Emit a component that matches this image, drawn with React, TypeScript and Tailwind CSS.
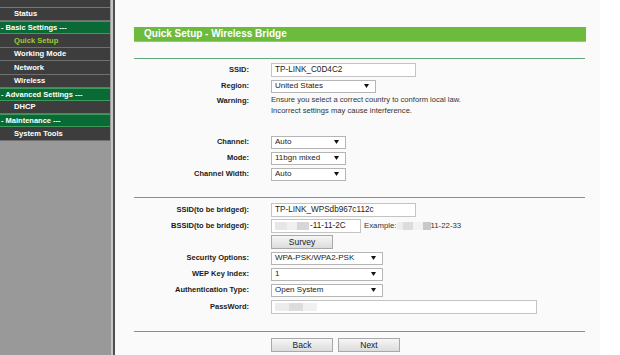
import React from "react";

const font = { fontFamily: '"Liberation Sans", Arial, sans-serif' };

const menu = [
  { label: "Status", kind: "item" },
  { label: "- Basic Settings ---", kind: "group" },
  { label: "Quick Setup", kind: "active" },
  { label: "Working Mode", kind: "item" },
  { label: "Network", kind: "item" },
  { label: "Wireless", kind: "item" },
  { label: "- Advanced Settings ---", kind: "group" },
  { label: "DHCP", kind: "item" },
  { label: "- Maintenance ---", kind: "group" },
  { label: "System Tools", kind: "item" },
];

function Sidebar() {
  return (
    <div className="flex w-[111px] shrink-0 flex-col bg-[#999999]">
      <div className="h-[8px] w-[110px] border-b border-[#777777] bg-[#3d3d3d]" />
      {menu.map((m) => {
        if (m.kind === "group") {
          return (
            <div
              key={m.label}
              className="flex h-[13px] w-[110px] items-center border-y border-[#3f9a5e] bg-[#0a6a36] pl-[1px] text-[7.5px] font-bold leading-none text-white"
            >
              {m.label}
            </div>
          );
        }
        return (
          <div
            key={m.label}
            className={
              "flex h-[13.4px] w-[110px] items-center border-b border-[#6f6f6f] bg-[#3d3d3d] pl-[14px] text-[7.6px] font-bold leading-none " +
              (m.kind === "active" ? "text-[#9acd32]" : "text-white")
            }
          >
            {m.label}
          </div>
        );
      })}
    </div>
  );
}

function Caret() {
  return (
    <svg width="5" height="4" viewBox="0 0 5 4" className="shrink-0">
      <path d="M0 0 H5 L2.5 4 Z" fill="#111" />
    </svg>
  );
}

function Select({ value, w }: { value: string; w: string }) {
  return (
    <div
      className={
        "flex h-[13px] items-center justify-between border border-[#b5b5b5] bg-white pl-[3px] pr-[6px] text-[8px] leading-none text-[#222] " +
        w
      }
    >
      <span>{value}</span>
      <Caret />
    </div>
  );
}

function TextBox({ w, children }: { w: string; children?: React.ReactNode }) {
  return (
    <div
      className={
        "flex h-[14px] items-center border border-[#c4c4c4] bg-white pl-[3px] text-[8.2px] leading-none text-[#222] " +
        w
      }
    >
      {children}
    </div>
  );
}

function Button({ label, w }: { label: string; w: string }) {
  return (
    <div
      className={
        "flex h-[14px] items-center justify-center border border-[#a8a8a8] bg-gradient-to-b from-[#f6f6f6] to-[#dcdcdc] text-[8.5px] leading-none text-[#222] " +
        w
      }
    >
      {label}
    </div>
  );
}

function Row({
  label,
  children,
  h = "h-[16px]",
}: {
  label?: string;
  children?: React.ReactNode;
  h?: string;
}) {
  return (
    <div className={"flex items-center " + h}>
      <div className="w-[116px] shrink-0 pr-[1px] text-right text-[7.5px] font-bold leading-none text-[#1a1a1a]">
        {label}
      </div>
      <div className="flex items-center pl-[21px]">{children}</div>
    </div>
  );
}

function Blur({ w, c = "bg-[#dedede]" }: { w: string; c?: string }) {
  return <span className={"inline-block h-[8px] " + w + " " + c} />;
}

function Divider() {
  return <div className="h-[1px] w-[451px] bg-[#63a77f]" />;
}

export default function App() {
  return (
    <div className="flex h-[355px] w-[620px] overflow-hidden bg-white" style={font}>
      <Sidebar />
      <div className="w-[2px] shrink-0 bg-[#c6c6c6]" />
      <div className="w-[2px] shrink-0 bg-[#4f4f4f]" />
      <div className="flex w-[485px] shrink-0 flex-col bg-[#fafafa] pl-[19px]">
        <div className="mt-[27px] flex h-[15px] w-[452px] items-center border-b border-[#8fd160] bg-[#6cbb3c] pl-[10px] text-[10px] font-bold leading-none text-white">
          Quick Setup - Wireless Bridge
        </div>

        <div className="mt-[16px]">
          <Divider />
        </div>

        <div className="mt-[3px] flex flex-col">
          <Row label="SSID:">
            <TextBox w="w-[145px]">TP-LINK_C0D4C2</TextBox>
          </Row>
          <Row label="Region:">
            <Select value="United States" w="w-[105px]" />
          </Row>
          <div className="flex items-start">
            <div className="w-[116px] shrink-0 pr-[1px] pt-[1px] text-right text-[7.5px] font-bold leading-[11px] text-[#1a1a1a]">
              Warning:
            </div>
            <div className="pl-[21px] text-[7.6px] leading-[11px] text-[#333]">
              Ensure you select a correct country to conform local law.
              <br />
              Incorrect settings may cause interference.
            </div>
          </div>
        </div>

        <div className="mt-[18px] flex flex-col">
          <Row label="Channel:">
            <Select value="Auto" w="w-[75px]" />
          </Row>
          <Row label="Mode:">
            <Select value="11bgn mixed" w="w-[75px]" />
          </Row>
          <Row label="Channel Width:">
            <Select value="Auto" w="w-[75px]" />
          </Row>
        </div>

        <div className="mt-[15px]">
          <Divider />
        </div>

        <div className="mt-[4px] flex flex-col">
          <Row label="SSID(to be bridged):">
            <TextBox w="w-[145px]">TP-LINK_WPSdb967c112c</TextBox>
          </Row>
          <Row label="BSSID(to be bridged):">
            <TextBox w="w-[90px]">
              <Blur w="w-[12px]" c="bg-[#e6e6e6]" />
              <Blur w="w-[10px]" c="bg-[#f0f0f0]" />
              <Blur w="w-[12px]" c="bg-[#d6d6d6]" />
              <span className="ml-[1px]">-11-11-2C</span>
            </TextBox>
            <span className="ml-[3px] flex items-center text-[7.8px] leading-none text-[#333]">
              Example:
              <Blur w="w-[6px]" c="bg-[#eeeeee]" />
              <Blur w="w-[10px]" c="bg-[#dcdcdc]" />
              <Blur w="w-[10px]" c="bg-[#f2f2f2]" />
              <Blur w="w-[8px]" c="bg-[#c8c8c8]" />
              <span>11-22-33</span>
            </span>
          </Row>
          <Row label="">
            <Button label="Survey" w="w-[62px]" />
          </Row>
          <Row label="Security Options:">
            <Select value="WPA-PSK/WPA2-PSK" w="w-[112px]" />
          </Row>
          <Row label="WEP Key Index:">
            <Select value="1" w="w-[112px]" />
          </Row>
          <Row label="Authentication Type:">
            <Select value="Open System" w="w-[112px]" />
          </Row>
          <Row label="PassWord:" h="h-[17px]">
            <TextBox w="w-[266px]">
              <Blur w="w-[14px]" c="bg-[#ececec]" />
              <Blur w="w-[14px]" c="bg-[#dcdcdc]" />
              <Blur w="w-[14px]" c="bg-[#f0f0f0]" />
            </TextBox>
          </Row>
        </div>

        <div className="mt-[16px]">
          <Divider />
        </div>

        <div className="mt-[6px] flex pl-[137px]">
          <Button label="Back" w="w-[62px]" />
          <div className="ml-[5px]">
            <Button label="Next" w="w-[62px]" />
          </div>
        </div>
      </div>
      <div className="flex-1 bg-white" />
    </div>
  );
}
